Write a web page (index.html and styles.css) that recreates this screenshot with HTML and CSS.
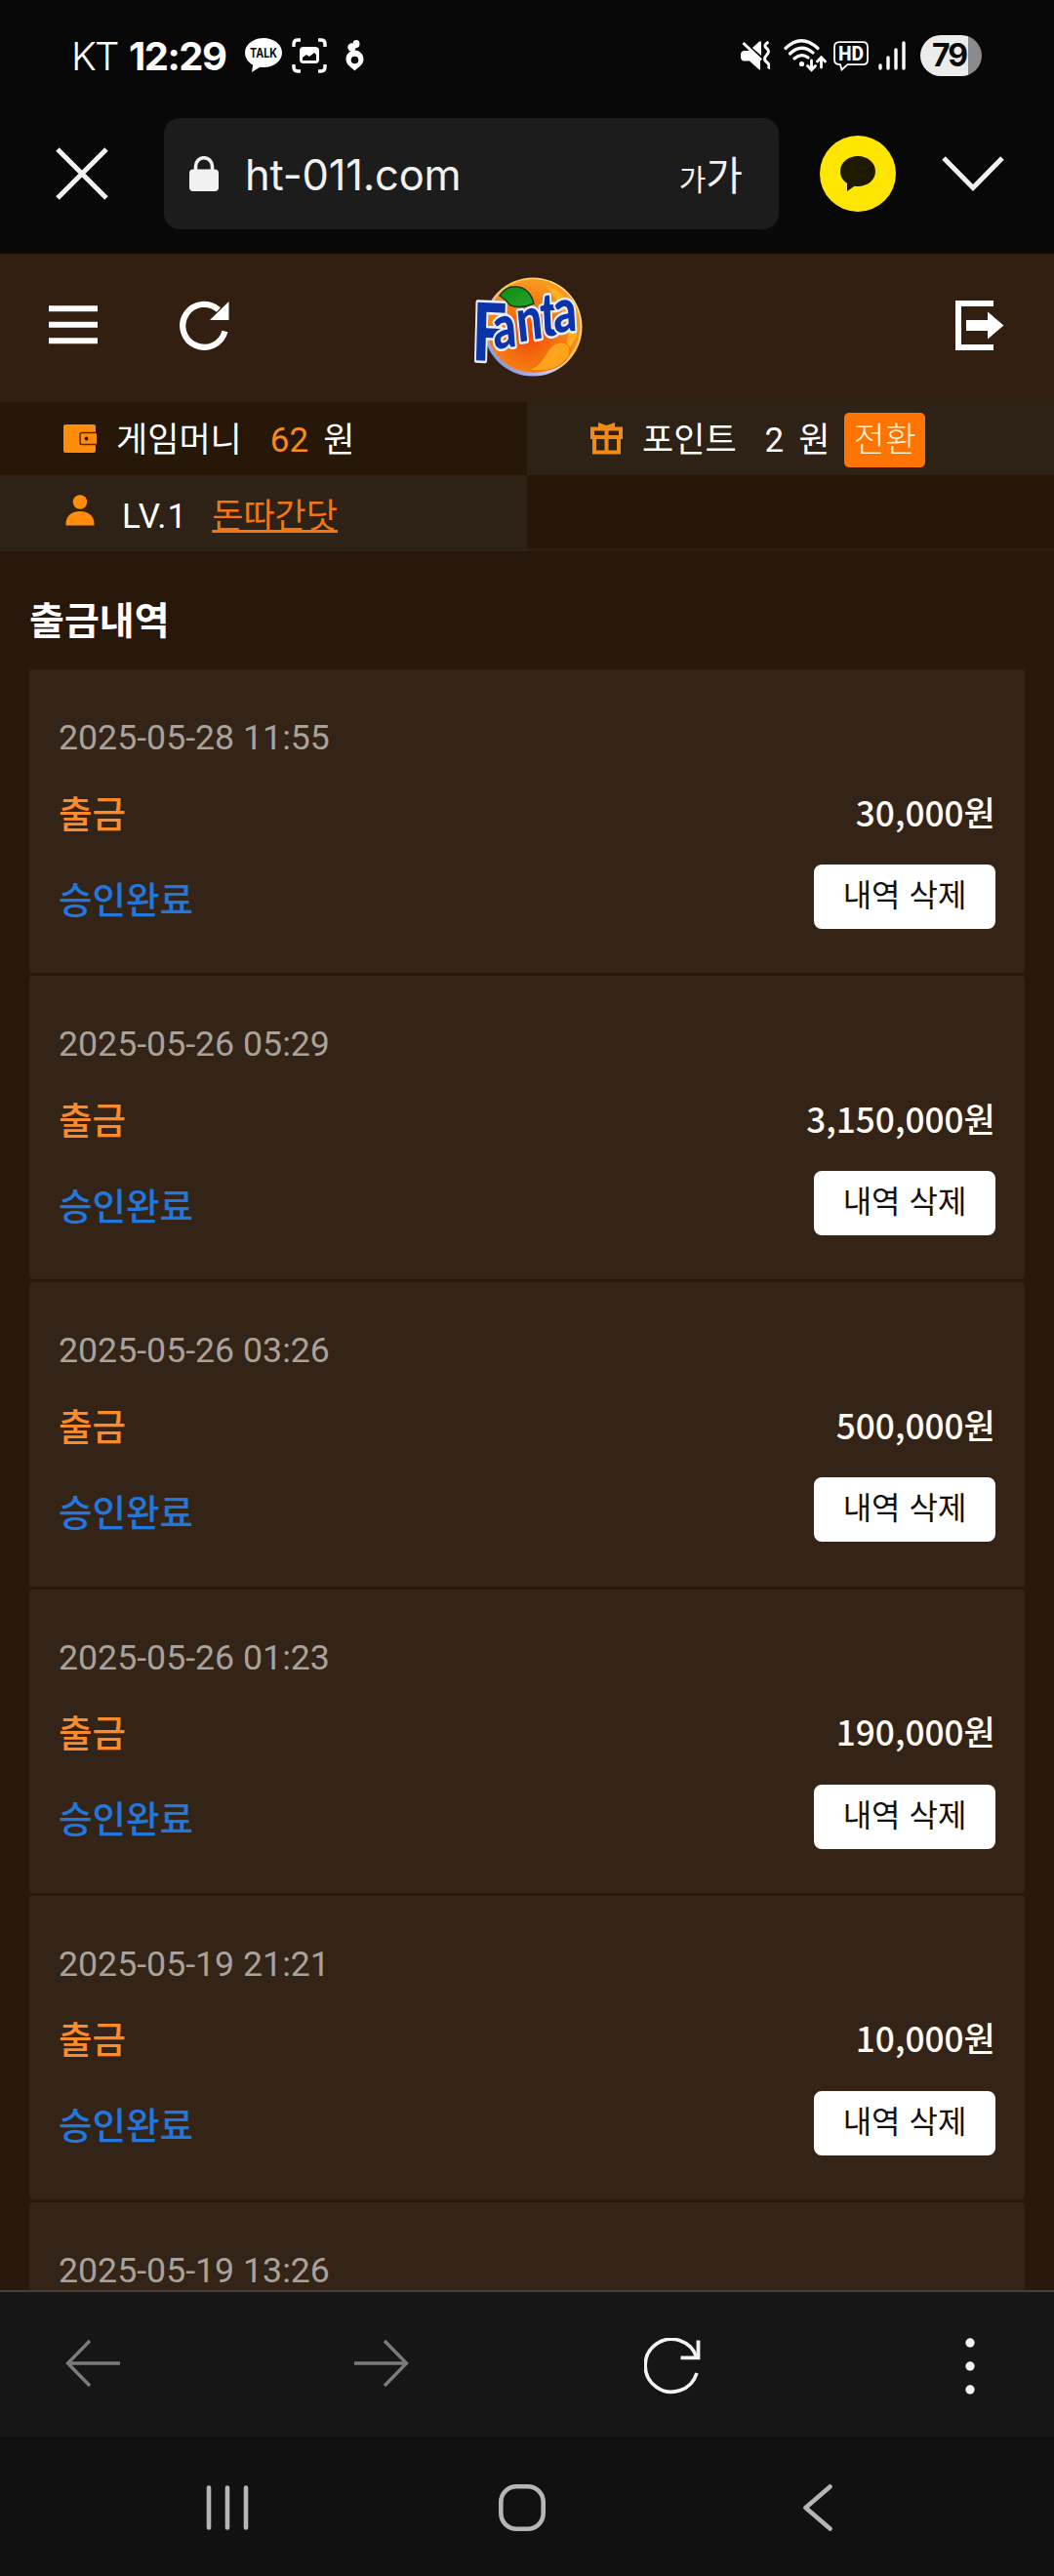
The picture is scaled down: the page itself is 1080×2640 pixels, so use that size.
FILE: index.html
```html
<!DOCTYPE html>
<html lang="ko">
<head>
    <meta charset="UTF-8">
    <meta name="viewport" content="width=device-width, initial-scale=1.0">
    <title>출금내역</title>
    <link rel="stylesheet" href="styles.css">
</head>
<body>
    <div class="status-bar">
        <span class="carrier">KT</span>
        <span class="clock">12:29</span>
        <svg class="st-talk" width="38" height="36" viewBox="0 0 38 36">
            <path d="M19 0C8.500 0 0 6.700 0 15c0 5.400 3.400 10 8.200 12.600L7 35l8.300-5.200c1.200.2 2.400.3 3.700.3 10.500 0 19-6.700 19-15.100S29.500 0 19 0z" fill="#fff"/>
            <text class="talk-text" x="19" y="20.300" text-anchor="middle" textLength="28" lengthAdjust="spacingAndGlyphs">TALK</text>
        </svg>
        <svg class="st-shot" width="36" height="36" viewBox="0 0 36 36">
            <path d="M2 9V6q0-4 4-4h3M27 2h3q4 0 4 4v3M34 27v3q0 4-4 4h-3M9 34H6q-4 0-4-4v-3" fill="none" stroke="#fff" stroke-width="3.400"/>
            <rect x="8" y="9" width="20" height="17" rx="4" fill="#fff"/>
            <path d="M11 23v-3l4-3 3 2 5-4 2 2v6z" fill="#080808"/>
        </svg>
        <svg class="st-six" width="19" height="32" viewBox="0 0 19 32">
            <circle cx="6.500" cy="7.500" r="4.200" fill="#fff"/>
            <ellipse cx="11" cy="4" rx="3.500" ry="4" fill="#fff"/>
            <path d="M9.500 10.500c-5 0-9 4-9 9 0 6 5 8 9 12 4-4 9-6 9-12 0-5-4-9-9-9z" fill="#fff"/>
            <circle cx="9.500" cy="20.500" r="3.800" fill="#080808"/>
        </svg>
        <div class="status-right">
            <svg width="30" height="30" viewBox="0 0 30 30">
                <path d="M0 14q0-4 4-4h5L20 19v10.500h-1L9 20.500H3q-3-1-3-4z" fill="#fff"/>
                <path d="M12 7L19 .5h2V15z" fill="#fff"/>
                <path d="M2.500 2L21 19.500" stroke="#fff" stroke-width="3"/>
                <path d="M28.500 1q-6 3.500-2 6.500t0 7 0 7 2 7" fill="none" stroke="#fff" stroke-width="3"/>
            </svg>
            <svg class="st-wifi" width="44" height="34" viewBox="0 0 44 34">
                <g fill="none" stroke="#fff" stroke-width="3.200" stroke-linecap="round">
                    <path d="M2 9.500Q18-6 35 9.500M6.500 15Q18 4 30 14M11 20Q18 14 25 19"/>
                    <path d="M28.500 22v9.500m-4-4l4 4.300 4-4.300M38.500 29v-10m-4 4l4-4.300 4 4.300" stroke-width="2.800"/>
                </g>
                <circle cx="18.500" cy="25.500" r="2.600" fill="#fff"/>
            </svg>
            <svg class="st-hd" width="36" height="31" viewBox="0 0 36 31">
                <path d="M6 1.200h24q5 0 5 5v13q0 5-5 5H14.500L8.500 29.500 7 24.200q-6 0-6-5v-13q0-5 5-5z" fill="none" stroke="#fff" stroke-width="1.800"/>
                <text class="hd-text" x="18" y="20" text-anchor="middle" textLength="26" lengthAdjust="spacingAndGlyphs">HD</text>
            </svg>
            <svg class="st-signal" width="28" height="30" viewBox="0 0 28 30">
                <path d="M2 25v3M10 17v11M18 9v19M26 2v26" stroke="#fff" stroke-width="3.400" stroke-linecap="round"/>
            </svg>
            <div class="battery"><span>79</span></div>
        </div>
    </div>

    <div class="browser-bar">
        <svg class="close" width="54" height="54" viewBox="0 0 54 54">
            <path d="M2 2l50 50M52 2L2 52" stroke="#f1f1f1" stroke-width="5"/>
        </svg>
        <div class="url-box">
            <svg width="30" height="36" viewBox="0 0 30 36">
                <rect x="0" y="13.500" width="30" height="22.500" rx="4" fill="#f1f1f1"/>
                <path d="M6.500 15v-4.500a8.500 8.800 0 0 1 17 0V15" fill="none" stroke="#f1f1f1" stroke-width="3.600"/>
            </svg>
            <span class="url">ht-011.com</span>
            <span class="font-size-btn"><small>가</small>가</span>
        </div>
        <svg class="talk-btn" width="78" height="78" viewBox="0 0 78 78">
            <circle cx="39" cy="39" r="39" fill="#ffe600"/>
            <path d="M39 21c-10 0-18 6.500-18 15.500 0 5.500 2.800 9.500 7 12.300V57l7.500-5.200c1.100.2 2.300.2 3.500.2 10 0 18-6.500 18-15.500S49 21 39 21z" fill="#1e1a00"/>
        </svg>
        <svg class="chevron" width="64" height="38" viewBox="0 0 64 38">
            <path d="M2 3l30 30.500L62 3" fill="none" stroke="#f1f1f1" stroke-width="5"/>
        </svg>
    </div>

    <header class="site-header">
        <svg class="menu" width="50" height="40" viewBox="0 0 50 40">
            <path d="M0 3.200h50M0 19.800h50M0 36.300h50" stroke="#fff" stroke-width="6"/>
        </svg>
        <svg class="reload" width="51" height="51" viewBox="0 0 51 51">
            <path d="M46.500 31.500A22 22 0 1 1 40 9.500" fill="none" stroke="#fff" stroke-width="6.200"/>
            <path d="M50.500 1v19H31z" fill="#fff"/>
        </svg>
        <svg class="logo" width="118" height="104" viewBox="0 0 118 104">
            <defs>
                <radialGradient id="orange" cx=".45" cy=".6" r=".6">
                    <stop offset="0" stop-color="#f04a08"/>
                    <stop offset=".6" stop-color="#f67a12"/>
                    <stop offset="1" stop-color="#fb9a20"/>
                </radialGradient>
                <linearGradient id="rim" x1="0" y1="1" x2="1" y2="0">
                    <stop offset="0" stop-color="#6070d8"/>
                    <stop offset=".35" stop-color="#c9c8f0"/>
                    <stop offset=".6" stop-color="#ffc83c"/>
                    <stop offset="1" stop-color="#fff0c0"/>
                </linearGradient>
                <linearGradient id="leaf" x1="0" y1="0" x2="1" y2="1">
                    <stop offset="0" stop-color="#0c8a10"/>
                    <stop offset="1" stop-color="#2ba42c"/>
                </linearGradient>
            </defs>
            <circle cx="65" cy="51" r="50.500" fill="url(#rim)"/>
            <circle cx="65.500" cy="50" r="48" fill="url(#orange)"/>
            <path d="M78 8q18 6 26 22 8 14 6 30-6 14-18 22Q108 62 96 38 88 20 78 8z" fill="#ffb820" opacity=".8"/>
            <path d="M60 95c18-4 18-26 32-28 12-1 14 10 7 18-8 9-22 13-39 10z" fill="#ffa31c" stroke="#e87008"/>
            <text class="logo-text" transform="scale(.75 1)" x="3 34 67 98 116" y="85 74 67 61 57" rotate="2 -6 -8 -4 -4"><tspan class="logo-f">F</tspan>anta</text>
            <path d="M31 19Q38 8 50 10q12 2 16 17-12 6-24 2-5-6-11-10z" fill="url(#leaf)" stroke="#123c0c" stroke-width="1.500"/>
        </svg>
        <svg class="logout" width="50" height="51" viewBox="0 0 50 51">
            <path d="M39 3H3v45h36" fill="none" stroke="#fff" stroke-width="6"/>
            <path d="M11 20h22v-8.500L49.500 25.500 33 39.500V31H11z" fill="#fff"/>
        </svg>
    </header>

    <div class="user-info">
        <div class="info-cell money">
            <svg width="34" height="29" viewBox="0 0 34 29">
                <rect x="0" y="0" width="33" height="29" rx="2" fill="#ff8c0a"/>
                <path d="M36 8.500H19q-2 0-2 2v8q0 2 2 2h17" fill="#ff8c0a" stroke="#4a2807" stroke-width="1.500"/>
                <circle cx="23.500" cy="14.500" r="1.900" fill="#261708"/>
            </svg>
            <span class="label">게임머니</span>
            <span class="value">62</span>
            <span class="won">원</span>
        </div>
        <div class="info-cell point">
            <svg width="33" height="33" viewBox="0 0 33 33">
                <path d="M2 6.500h29V15H2zM4 15v15.500h25V15M16.500 15v15" fill="none" stroke="#f28a17" stroke-width="4"/>
                <path d="M8 0l8.500 3L25 0v6H8z" fill="#f28a17"/>
                <path d="M16.500 5v10" stroke="#f28a17" stroke-width="4"/>
            </svg>
            <span class="label">포인트</span>
            <span class="value">2</span>
            <span class="won">원</span>
            <span class="convert">전환</span>
        </div>
        <div class="info-cell level">
            <svg width="30" height="32" viewBox="0 0 30 32">
                <circle cx="15" cy="7.500" r="7.300" fill="#ff8c0a"/>
                <path d="M.500 31.500v-2.500C1 21 7 17 15 17s14 4 14.500 12v2.500z" fill="#ff8c0a"/>
            </svg>
            <span class="label">LV.1</span>
            <a class="nick">돈따간닷</a>
        </div>
        <div class="info-cell empty"></div>
    </div>

    <main class="history">
        <h1>출금내역</h1>
        <div class="card">
            <div class="date">2025-05-28 11:55</div>
            <div class="line"><span class="type">출금</span><span class="amount">30,000원</span></div>
            <div class="line bottom"><span class="state">승인완료</span><span class="delete">내역 삭제</span></div>
        </div>
        <div class="card">
            <div class="date">2025-05-26 05:29</div>
            <div class="line"><span class="type">출금</span><span class="amount">3,150,000원</span></div>
            <div class="line bottom"><span class="state">승인완료</span><span class="delete">내역 삭제</span></div>
        </div>
        <div class="card">
            <div class="date">2025-05-26 03:26</div>
            <div class="line"><span class="type">출금</span><span class="amount">500,000원</span></div>
            <div class="line bottom"><span class="state">승인완료</span><span class="delete">내역 삭제</span></div>
        </div>
        <div class="card">
            <div class="date">2025-05-26 01:23</div>
            <div class="line"><span class="type">출금</span><span class="amount">190,000원</span></div>
            <div class="line bottom"><span class="state">승인완료</span><span class="delete">내역 삭제</span></div>
        </div>
        <div class="card">
            <div class="date">2025-05-19 21:21</div>
            <div class="line"><span class="type">출금</span><span class="amount">10,000원</span></div>
            <div class="line bottom"><span class="state">승인완료</span><span class="delete">내역 삭제</span></div>
        </div>
        <div class="card">
            <div class="date">2025-05-19 13:26</div>
        </div>
    </main>

    <div class="toolbar">
        <svg class="tb-back" width="56" height="50" viewBox="0 0 56 50">
            <path d="M56 25H3M25 2L2.500 25 25 48" fill="none" stroke="#7b7b7b" stroke-width="3.400"/>
        </svg>
        <svg class="tb-forward" width="56" height="50" viewBox="0 0 56 50">
            <path d="M0 25h53M31 2l22.500 23L31 48" fill="none" stroke="#7b7b7b" stroke-width="3.400"/>
        </svg>
        <svg class="tb-reload" width="58" height="58" viewBox="0 0 58 58">
            <path d="M54 36A27 27 0 1 1 54 20.500" fill="none" stroke="#f3f3f3" stroke-width="3.600"/>
            <path d="M55.500 2.500v17.800H37.500" fill="none" stroke="#f3f3f3" stroke-width="3.800"/>
        </svg>
        <svg class="tb-more" width="10" height="58" viewBox="0 0 10 58">
            <circle cx="5" cy="5" r="4.700" fill="#f3f3f3"/>
            <circle cx="5" cy="29" r="4.700" fill="#f3f3f3"/>
            <circle cx="5" cy="53" r="4.700" fill="#f3f3f3"/>
        </svg>
    </div>

    <div class="nav-bar">
        <svg class="nav-recent" width="44" height="48" viewBox="0 0 44 48">
            <path d="M3 3.500v41M22 3.500v41M41 3.500v41" stroke="#b6b6b6" stroke-width="4.600" stroke-linecap="round"/>
        </svg>
        <svg class="nav-home" width="48" height="48" viewBox="0 0 48 48">
            <rect x="2.300" y="2.300" width="43.400" height="43.400" rx="16" fill="none" stroke="#b6b6b6" stroke-width="4.600"/>
        </svg>
        <svg class="nav-back" width="30" height="48" viewBox="0 0 30 48">
            <path d="M27.500 2.500L2.500 24l25 21.500" fill="none" stroke="#b6b6b6" stroke-width="4.600" stroke-linecap="round" stroke-linejoin="round"/>
        </svg>
    </div>
</body>
</html>
```

FILE: styles.css
```css
* {
    box-sizing: border-box;
}
body {
    margin: 0;
    width: 1080px;
    height: 2640px;
    overflow: hidden;
    display: flex;
    flex-direction: column;
    background: #28180b;
    color: #fff;
    font-family: Roboto, "Noto Sans CJK KR", sans-serif;
}
svg {
    display: block;
    flex: none;
}
span, a {
    white-space: nowrap;
}

/* status bar */
.status-bar {
    flex: none;
    display: flex;
    align-items: center;
    height: 114px;
    padding-left: 73px;
    background: #080808;
}
.carrier {
    width: 59px;
    font-family: Inter, sans-serif;
    font-size: 40px;
    font-weight: 300;
    letter-spacing: -2px;
}
.clock {
    width: 119px;
    font-family: Inter, sans-serif;
    font-size: 40px;
    font-weight: 700;
    letter-spacing: -1.5px;
}
.st-talk, .logo {
    overflow: visible;
}
.st-shot {
    margin-left: 10px;
}
.st-six {
    margin-left: 19px;
}
.talk-text {
    font: 700 13px Inter, sans-serif;
    fill: #080808;
}
.hd-text {
    font: 800 20px Roboto, sans-serif;
    fill: #fff;
}
.status-right {
    display: flex;
    align-items: center;
    margin-left: auto;
    margin-right: 74px;
}
.st-wifi {
    margin-left: 14px;
}
.st-hd {
    margin-left: 7px;
}
.st-signal {
    margin-left: 10px;
}
.battery {
    width: 63px;
    height: 42px;
    margin-left: 15px;
    padding-left: 12px;
    border-radius: 21px;
    background: linear-gradient(90deg, #ececec 78%, #8b8b8b 78%);
    color: #0a0a0a;
    font: 700 32px/42px Inter, sans-serif;
    letter-spacing: -2px;
}

/* browser address bar */
.browser-bar {
    flex: none;
    display: flex;
    align-items: center;
    height: 146px;
    padding: 7px 51px 25px 57px;
    background: #080808;
}
.url-box {
    display: flex;
    align-items: center;
    width: 630px;
    height: 114px;
    margin-left: 57px;
    padding: 0 37px 0 26px;
    border-radius: 16px;
    background: #1c1c1c;
    color: #f1f1f1;
}
.url {
    margin-left: 27px;
    margin-top: 2px;
    font-family: Inter, sans-serif;
    font-size: 43.500px;
    font-weight: 400;
    letter-spacing: -.2px;
}
.font-size-btn {
    margin-left: auto;
    margin-top: 2px;
    font-family: "Noto Sans CJK KR", sans-serif;
    font-size: 41px;
    font-weight: 400;
    line-height: 60px;
}
.font-size-btn small {
    font-size: 30px;
}
.talk-btn {
    margin-left: 42px;
}
.chevron {
    margin-left: 47px;
}

/* site header */
.site-header {
    flex: none;
    display: flex;
    align-items: center;
    height: 152px;
    padding: 0 51px 6px 50px;
    background: #321f12;
}
.reload {
    margin-left: 84px;
}
.logo {
    margin-left: 246px;
    margin-top: 5px;
}
.logout {
    margin-left: auto;
}
.logo-text {
    font: 900 62px Lato, sans-serif;
    fill: #0c34a8;
    stroke: #e8f0ff;
    stroke-width: 5px;
    stroke-linejoin: round;
    paint-order: stroke;
}
.logo-f {
    font-size: 82px;
}

/* user info */
.user-info {
    flex: none;
    display: grid;
    grid-template-columns: 540px 540px;
    grid-template-rows: 75px 78px;
    font-size: 35px;
    line-height: 50px;
}
.info-cell {
    display: flex;
    align-items: center;
    padding-left: 65px;
    background: #2e2116;
}
.money, .empty {
    background: #261708;
}
.empty {
    border-bottom: 3px solid #2e1e10;
}
.label {
    margin-left: 20px;
}
.value {
    margin-left: 29px;
}
.money span, .point .label, .point .value, .point .won {
    margin-top: 4px;
}
.money .value {
    color: #f78d16;
}
.won {
    margin-left: 15px;
}
.convert {
    height: 56px;
    margin-left: 15px;
    padding: 0 9px;
    border-radius: 5px;
    background: #ff7300;
    color: #fff3d8;
    font-weight: 300;
    line-height: 57px;
}
.point .convert {
    margin-top: 2px;
}
.level {
    padding-left: 67px;
}
.level svg {
    margin-bottom: 6px;
}
.level .label {
    margin-left: 28px;
    margin-top: 8px;
    letter-spacing: 1px;
}
.nick {
    margin-left: 25px;
    margin-top: 7px;
    color: #f37512;
    text-decoration: underline;
    text-decoration-thickness: 3px;
    text-decoration-skip-ink: none;
}

/* withdrawal list */
.history {
    flex: 1;
    min-height: 0;
    overflow: hidden;
    padding: 0 30px;
}
h1 {
    margin: 0;
    height: 121px;
    padding-top: 38px;
    font-family: "Noto Sans CJK KR", sans-serif;
    font-size: 39px;
    font-weight: 600;
    line-height: 60px;
}
.card {
    height: 311.200px;
    margin-bottom: 3px;
    padding: 45px 30px 0;
    border-radius: 3px;
    background: #342418;
}
.date {
    color: #a9a29b;
    font-size: 35.700px;
    line-height: 50px;
}
.line {
    display: flex;
    align-items: center;
    justify-content: space-between;
    height: 60px;
    margin-top: 20px;
    font-family: "Noto Sans CJK KR", sans-serif;
    font-weight: 500;
}
.line.bottom {
    height: 66px;
    margin-top: 25px;
}
.type {
    color: #fb8b2b;
    font-size: 37.500px;
}
.amount {
    color: #fffaf2;
    font-size: 35.200px;
}
.state {
    color: #2277dd;
    font-size: 37.500px;
}
.delete {
    width: 186px;
    height: 66px;
    border-radius: 8px;
    background: #fff;
    color: #111;
    font-size: 32px;
    font-weight: 400;
    line-height: 58px;
    text-align: center;
}

/* browser toolbar */
.toolbar {
    flex: none;
    display: flex;
    align-items: center;
    height: 150px;
    padding: 0 81px 0 67px;
    border-top: 2px solid #46413a;
    background: #161616;
}
.tb-forward {
    margin-left: 240px;
}
.tb-back, .tb-forward {
    margin-bottom: 3px;
}
.tb-reload {
    margin-left: 241px;
    margin-top: 3px;
}
.tb-more {
    margin-left: auto;
    margin-top: 3px;
}

/* system navigation */
.nav-bar {
    flex: none;
    display: flex;
    align-items: center;
    height: 143px;
    padding: 3px 0 0 211px;
    background: #111;
}
.nav-home {
    margin-left: 256px;
}
.nav-back {
    margin-left: 264px;
}
```
